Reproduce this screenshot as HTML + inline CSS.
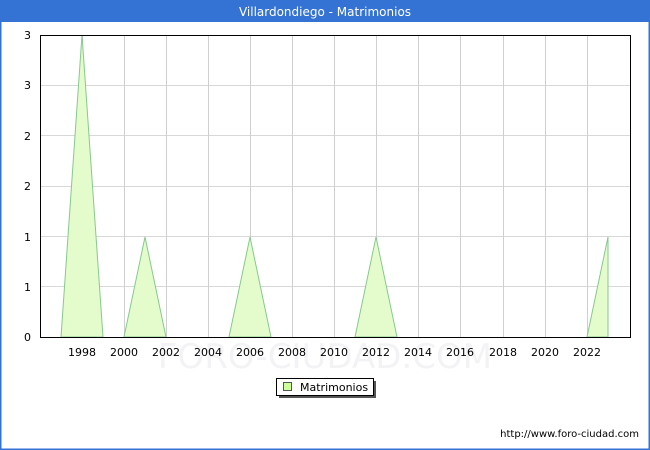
<!DOCTYPE html><html><head><style>body{margin:0}svg{display:block}text{font-family:"DejaVu Sans","Liberation Sans",sans-serif}</style></head><body>
<svg width="650" height="450" xmlns="http://www.w3.org/2000/svg">
<rect x="0" y="0" width="650" height="450" fill="#fff"/>
<rect x="0.5" y="0.5" width="649" height="449" fill="none" stroke="#3473d4" stroke-width="2"/>
<rect x="0" y="0" width="650" height="22" fill="#3473d4"/>
<text x="325" y="16" fill="#fff" font-size="12" text-anchor="middle">Villardondiego - Matrimonios</text>
<text x="325" y="368" fill="#f3f3f6" font-size="34" text-anchor="middle">FORO-CIUDAD.COM</text>
<g stroke="#d8d8d8" stroke-width="1">
<line x1="41" y1="85.5" x2="630" y2="85.5"/><line x1="41" y1="135.5" x2="630" y2="135.5"/><line x1="41" y1="186.5" x2="630" y2="186.5"/><line x1="41" y1="236.5" x2="630" y2="236.5"/><line x1="41" y1="286.5" x2="630" y2="286.5"/>
</g>
<g stroke="#cfcfcf" stroke-width="1">
<line x1="82.5" y1="35" x2="82.5" y2="337"/><line x1="124.5" y1="35" x2="124.5" y2="337"/><line x1="166.5" y1="35" x2="166.5" y2="337"/><line x1="208.5" y1="35" x2="208.5" y2="337"/><line x1="250.5" y1="35" x2="250.5" y2="337"/><line x1="292.5" y1="35" x2="292.5" y2="337"/><line x1="334.5" y1="35" x2="334.5" y2="337"/><line x1="376.5" y1="35" x2="376.5" y2="337"/><line x1="418.5" y1="35" x2="418.5" y2="337"/><line x1="460.5" y1="35" x2="460.5" y2="337"/><line x1="503.5" y1="35" x2="503.5" y2="337"/><line x1="545.5" y1="35" x2="545.5" y2="337"/><line x1="587.5" y1="35" x2="587.5" y2="337"/>
</g>
<g fill="#e4fccc" stroke="#86c98e" stroke-width="1">
<path d="M61 337L82 35L103 337Z"/>
<path d="M124 337L145 237L166 337Z"/>
<path d="M229 337L250 237L271 337Z"/>
<path d="M355 337L376 237L397 337Z"/>
<path d="M587 337L608 237L608 337Z"/>
</g>
<rect x="40.5" y="35.5" width="590" height="302" fill="none" stroke="#000" stroke-width="1"/>
<g font-size="11" fill="#000" text-anchor="end">
<text x="31" y="39">3</text><text x="31" y="89">3</text><text x="31" y="140">2</text><text x="31" y="190">2</text><text x="31" y="241">1</text><text x="31" y="291">1</text><text x="31" y="341">0</text>
</g>
<g font-size="11" fill="#000" text-anchor="middle">
<text x="82" y="356">1998</text><text x="124" y="356">2000</text><text x="166" y="356">2002</text><text x="208" y="356">2004</text><text x="250" y="356">2006</text><text x="292" y="356">2008</text><text x="334" y="356">2010</text><text x="376" y="356">2012</text><text x="418" y="356">2014</text><text x="460" y="356">2016</text><text x="503" y="356">2018</text><text x="545" y="356">2020</text><text x="587" y="356">2022</text>
</g>
<rect x="279" y="381" width="97" height="17" fill="#555"/>
<rect x="276.5" y="378.5" width="97" height="17" fill="#fff" stroke="#000"/>
<rect x="283.5" y="382.5" width="8" height="8" fill="#ccff99" stroke="#555"/>
<text x="300" y="391" font-size="11">Matrimonios</text>
<text x="639" y="437" font-size="10" text-anchor="end">http://www.foro-ciudad.com</text>
</svg>
</body></html>
